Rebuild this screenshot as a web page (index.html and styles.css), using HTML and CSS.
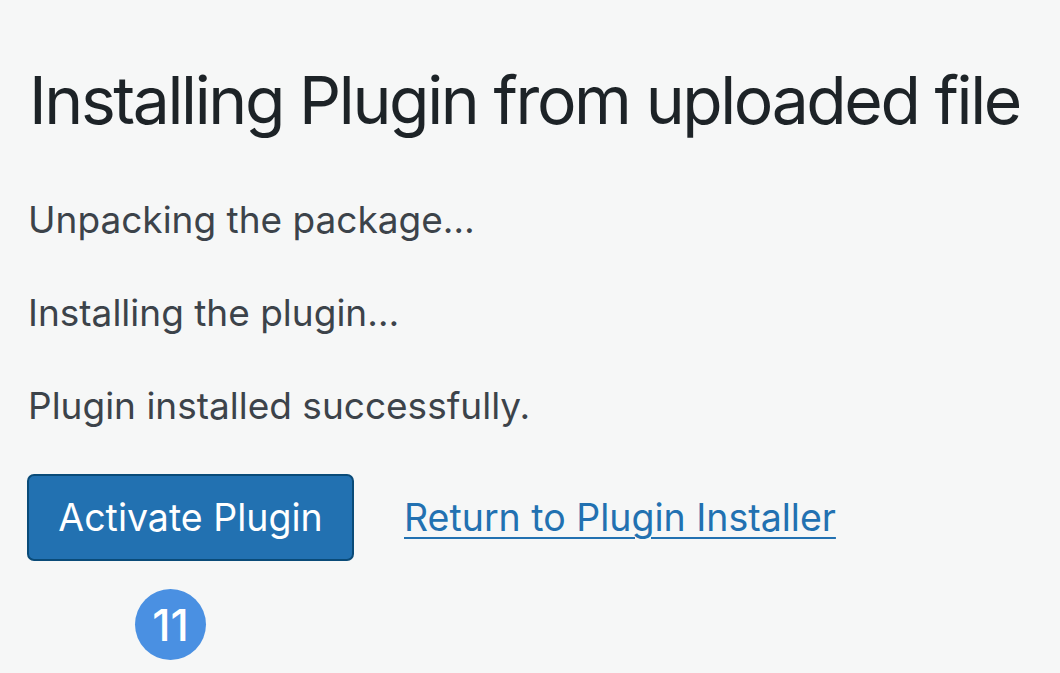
FILE: index.html
```html
<!DOCTYPE html>
<html>
<head>
<meta charset="utf-8">
<link rel="stylesheet" href="styles.css">
</head>
<body>
<div class="wrap">
  <h1 class="title">Installing Plugin from uploaded file</h1>
  <p class="msg">Unpacking the package…</p>
  <p class="msg">Installing the plugin…</p>
  <p class="msg">Plugin installed successfully.</p>
  <div class="actions">
    <a class="btn" href="#">Activate Plugin</a>
    <a class="link" href="#">Return to Plugin Installer</a>
  </div>
  <div class="badge-row"><span class="badge">11</span></div>
</div>
</body>
</html>
```
FILE: styles.css
```css
html, body {
  margin: 0;
  padding: 0;
  background: #f6f7f7;
}
.wrap {
  padding: 62px 0 0 28px;
  font-family: Inter, "Noto Sans", sans-serif;
}
.title {
  margin: 0 0 0 1px;
  font-size: 66px;
  font-weight: 400;
  line-height: 76px;
  color: #1d2327;
  letter-spacing: -2.4px;
  white-space: nowrap;
}
.msg {
  margin: 0;
  font-size: 37px;
  line-height: 93px;
  color: #3c434a;
}
.msg:first-of-type {
  margin-top: 35px;
}
.actions {
  display: flex;
  align-items: center;
  gap: 50px;
  margin-top: 22px;
}
.btn {
  display: flex;
  align-items: center;
  justify-content: center;
  width: 323px;
  height: 83px;
  box-sizing: content-box;
  background: #2271b1;
  border: 2px solid #0a4b78;
  border-radius: 7px;
  color: #fff;
  font-size: 37.5px;
  text-decoration: none;
  margin-left: -1px;
}
.link {
  color: #2271b1;
  font-size: 37.5px;
  text-decoration: underline;
  text-underline-offset: 6px;
  text-decoration-thickness: 2px;
}
.badge-row {
  padding-left: 107px;
  margin-top: 28px;
}
.badge {
  display: flex;
  align-items: center;
  justify-content: center;
  width: 71px;
  height: 71px;
  border-radius: 50%;
  background: #4a90e2;
  color: #fff;
  font-size: 44px;
  font-weight: 500;
}
```
